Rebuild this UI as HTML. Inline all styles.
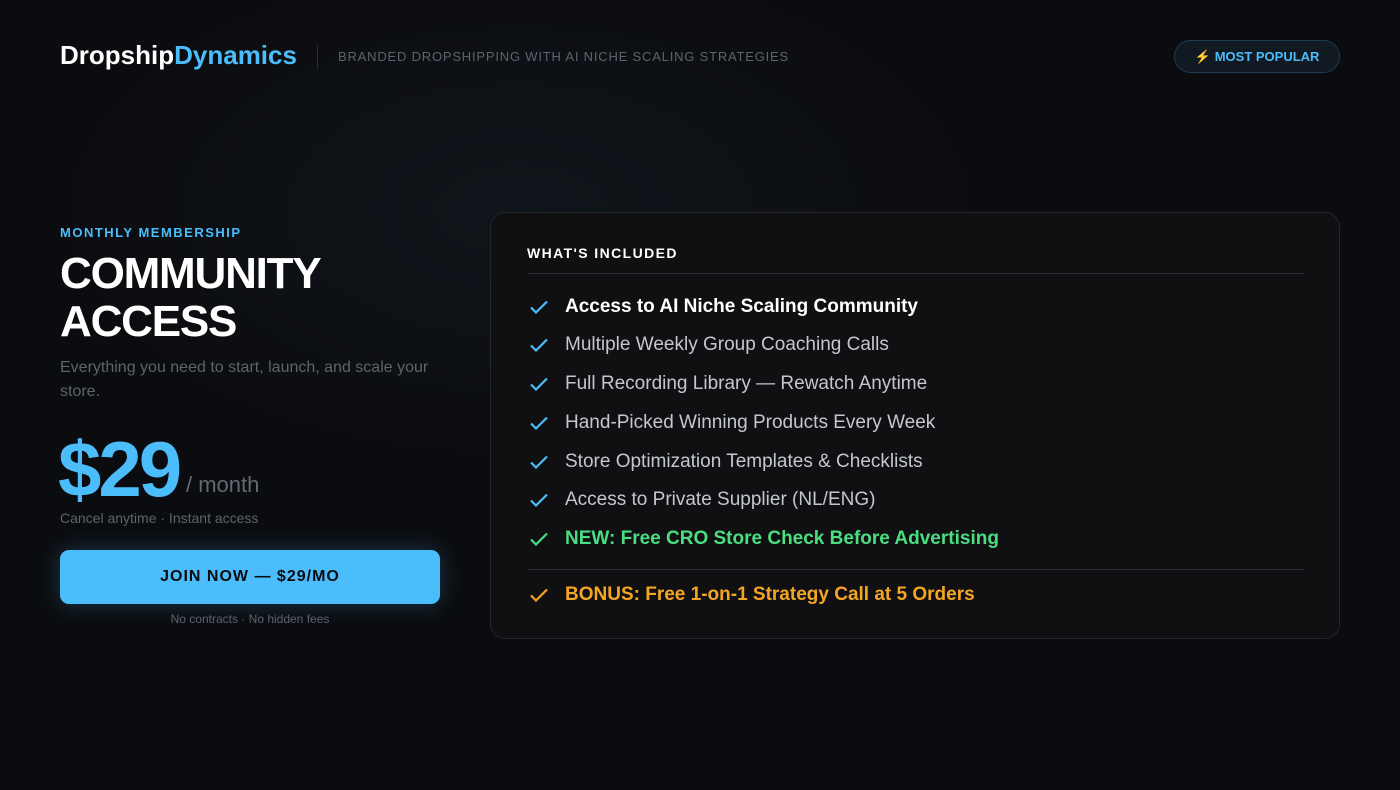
<!DOCTYPE html>
<html><head><meta charset="utf-8"><style>
*{margin:0;padding:0;box-sizing:border-box}
body{width:1400px;height:790px;background:#0b0c0f;font-family:"Liberation Sans",sans-serif;position:relative;overflow:hidden;
background:radial-gradient(ellipse 480px 260px at 520px 210px,#10151b 0%,#0b0c0f 100%);}
.a{position:absolute;white-space:nowrap}
.logo{left:60px;top:40px;font-size:26px;font-weight:700;color:#fff}
.logo span{color:#4cbdfb}
.sep{left:317px;top:45px;width:1px;height:24px;background:#2a2d33}
.tag{left:338px;top:49px;font-size:13px;color:#5d636d;letter-spacing:0.8px}
.pop{left:1174px;top:40px;width:166px;height:33px;border:1px solid #1f3b50;background:#111a22;border-radius:17px;color:#4cbdfb;font-size:13px;font-weight:700;display:flex;align-items:center;justify-content:center}
.pop b{color:#f5b321;margin-right:4px;font-weight:400}
.mm{left:60px;top:225px;font-size:13px;font-weight:700;color:#4cbdfb;letter-spacing:1.5px}
.h1{left:60px;top:250px;font-size:44px;font-weight:700;color:#fff;line-height:48px;letter-spacing:-1.2px}
.sub{left:60px;top:356px;font-size:16px;color:#5e636c;line-height:24px;white-space:normal;width:390px}
.price{left:58px;top:424px;font-size:78px;font-weight:700;color:#4cbdfb;letter-spacing:-3px;line-height:90px}
.mo{left:186px;top:472px;font-size:22px;color:#646972}
.cancel{left:60px;top:510px;font-size:14px;color:#5e636c}
.btn{left:60px;top:550px;width:380px;height:54px;background:#4cbdfb;border-radius:9px;color:#0b0c0f;font-weight:700;font-size:16px;letter-spacing:1px;display:flex;align-items:center;justify-content:center;box-shadow:0 0 24px rgba(76,189,251,.25)}
.nc{left:60px;top:612px;width:380px;text-align:center;font-size:12px;color:#5e636c}
.card{left:490px;top:212px;width:850px;height:427px;background:#101013;border:1px solid #23252a;border-radius:15px}
.wi{left:527px;top:245px;font-size:14px;font-weight:700;color:#fff;letter-spacing:1.4px}
.hr{left:527px;width:777px;height:1px;background:#2a2c31}
.it{left:528px;font-size:19px;color:#c3c7cf;display:flex;align-items:center}
.it svg{width:22px;height:22px;margin-right:15px}
</style></head><body>
<div class="a logo">Dropship<span>Dynamics</span></div>
<div class="a sep"></div>
<div class="a tag">BRANDED DROPSHIPPING WITH AI NICHE SCALING STRATEGIES</div>
<div class="a pop"><b>⚡</b>MOST POPULAR</div>

<div class="a mm">MONTHLY MEMBERSHIP</div>
<div class="a h1">COMMUNITY<br>ACCESS</div>
<div class="a sub">Everything you need to start, launch, and scale your store.</div>
<div class="a price">$29</div>
<div class="a mo">/ month</div>
<div class="a cancel">Cancel anytime · Instant access</div>
<div class="a btn">JOIN NOW — $29/MO</div>
<div class="a nc">No contracts · No hidden fees</div>

<div class="a card"></div>
<div class="a wi">WHAT'S INCLUDED</div>
<div class="a hr" style="top:273px"></div>
<div class="a it" style="top:296px;color:#fff;font-weight:700"><svg viewBox="0 0 22 22"><path d="M3 11.5l5 5L19 5.5" fill="none" stroke="#4cbdfb" stroke-width="2.2"/></svg>Access to AI Niche Scaling Community</div>
<div class="a it" style="top:334px"><svg viewBox="0 0 22 22"><path d="M3 11.5l5 5L19 5.5" fill="none" stroke="#4cbdfb" stroke-width="2.2"/></svg>Multiple Weekly Group Coaching Calls</div>
<div class="a it" style="top:373px"><svg viewBox="0 0 22 22"><path d="M3 11.5l5 5L19 5.5" fill="none" stroke="#4cbdfb" stroke-width="2.2"/></svg>Full Recording Library — Rewatch Anytime</div>
<div class="a it" style="top:412px"><svg viewBox="0 0 22 22"><path d="M3 11.5l5 5L19 5.5" fill="none" stroke="#4cbdfb" stroke-width="2.2"/></svg>Hand-Picked Winning Products Every Week</div>
<div class="a it" style="top:451px"><svg viewBox="0 0 22 22"><path d="M3 11.5l5 5L19 5.5" fill="none" stroke="#4cbdfb" stroke-width="2.2"/></svg>Store Optimization Templates &amp; Checklists</div>
<div class="a it" style="top:489px"><svg viewBox="0 0 22 22"><path d="M3 11.5l5 5L19 5.5" fill="none" stroke="#4cbdfb" stroke-width="2.2"/></svg>Access to Private Supplier (NL/ENG)</div>
<div class="a it" style="top:528px;color:#4ade80;font-weight:700"><svg viewBox="0 0 22 22"><path d="M3 11.5l5 5L19 5.5" fill="none" stroke="#4ade80" stroke-width="2.2"/></svg>NEW: Free CRO Store Check Before Advertising</div>
<div class="a hr" style="top:569px"></div>
<div class="a it" style="top:584px;color:#f5a524;font-weight:700"><svg viewBox="0 0 22 22"><path d="M3 11.5l5 5L19 5.5" fill="none" stroke="#f5a524" stroke-width="2.2"/></svg>BONUS: Free 1-on-1 Strategy Call at 5 Orders</div>
</body></html>
